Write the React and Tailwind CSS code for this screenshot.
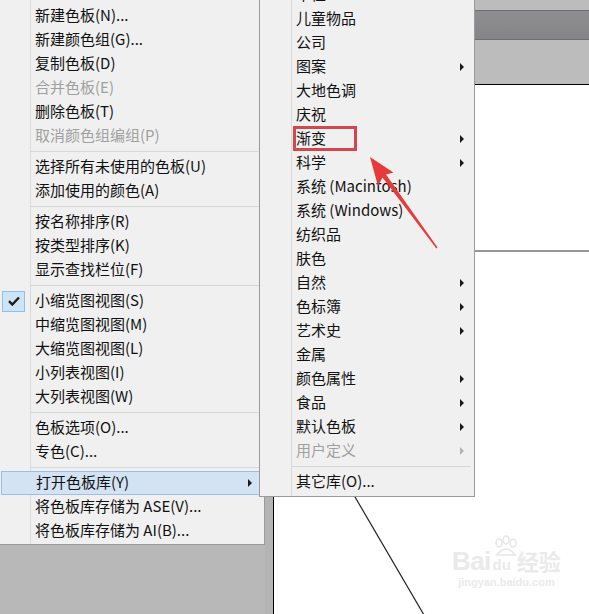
import React from "react";

const FONT = { fontFamily: '"Noto Sans CJK SC", "Noto Sans", sans-serif' };

const leftItems = [
  { t: "新建色板(N)..." },
  { t: "新建颜色组(G)..." },
  { t: "复制色板(D)" },
  { t: "合并色板(E)", d: true },
  { t: "删除色板(T)" },
  { t: "取消颜色组编组(P)", d: true },
  { sep: true },
  { t: "选择所有未使用的色板(U)" },
  { t: "添加使用的颜色(A)" },
  { sep: true },
  { t: "按名称排序(R)" },
  { t: "按类型排序(K)" },
  { t: "显示查找栏位(F)" },
  { sep: true },
  { t: "小缩览图视图(S)", c: true },
  { t: "中缩览图视图(M)" },
  { t: "大缩览图视图(L)" },
  { t: "小列表视图(I)" },
  { t: "大列表视图(W)" },
  { sep: true },
  { t: "色板选项(O)..." },
  { t: "专色(C)..." },
  { sep: true },
  { t: "打开色板库(Y)", h: true, a: true },
  { t: "将色板库存储为 ASE(V)..." },
  { t: "将色板库存储为 AI(B)..." },
];

const subItems = [
  { t: "中性" },
  { t: "儿童物品" },
  { t: "公司" },
  { t: "图案", a: true },
  { t: "大地色调" },
  { t: "庆祝" },
  { t: "渐变", a: true },
  { t: "科学", a: true },
  { t: "系统 (Macintosh)" },
  { t: "系统 (Windows)" },
  { t: "纺织品" },
  { t: "肤色" },
  { t: "自然", a: true },
  { t: "色标簿", a: true },
  { t: "艺术史", a: true },
  { t: "金属" },
  { t: "颜色属性", a: true },
  { t: "食品", a: true },
  { t: "默认色板", a: true },
  { t: "用户定义", a: true, d: true },
  { sep: true },
  { t: "其它库(O)..." },
];

function Arrow({ disabled }) {
  return (
    <span
      className={
        "w-0 h-0 border-y-[4px] border-y-transparent border-l-[4px] " +
        (disabled ? "border-l-[#b4b4b4]" : "border-l-[#1a1a1a]")
      }
    />
  );
}

function Check() {
  return (
    <svg width="12" height="10" viewBox="0 0 12 10">
      <path d="M1 5.2 L4.3 8.5 L11 1.5" fill="none" stroke="#1c1c1c" strokeWidth="2.4" />
    </svg>
  );
}

function MenuList({ items }) {
  return items.map((it, i) =>
    it.sep ? (
      <div key={i} className="h-[7px] flex items-center pl-[31px] pr-[3px]">
        <div className="h-px flex-1 bg-[#d7d7d7]" />
      </div>
    ) : (
      <div
        key={i}
        className={
          "h-6 flex items-center relative " +
          (it.h ? "mx-px bg-[#d3e3f4] border border-[#9cbfe4]" : "")
        }
      >
        <div className={"w-[31px] h-full flex items-center shrink-0 " + (it.h ? "-ml-px" : "")}>
          {it.c && (
            <div className="ml-[2px] w-[23px] h-[21px] bg-[#cde4f7] border border-[#8fc0e9] flex items-center justify-center">
              <Check />
            </div>
          )}
        </div>
        <span
          className={
            "pl-[4px] flex-1 text-[15px] leading-none whitespace-nowrap relative -top-[2px] " +
            (it.d ? "text-[#a0a0a0]" : "text-[#111]")
          }
        >
          {it.t}
        </span>
        {it.a && (
          <div className="w-[14px] flex items-center">
            <Arrow disabled={it.d} />
          </div>
        )}
      </div>
    )
  );
}

export default function App() {
  return (
    <div
      className="w-[589px] h-[614px] relative overflow-hidden bg-[#b9b8b9] flex"
      style={FONT}
    >
      {/* left main menu */}
      <div className="w-[265px] shrink-0 flex flex-col">
        <div className="bg-[#f0f0f0] border-r border-b border-[#9a9a9a] pt-1 pb-[1px] bg-[linear-gradient(to_right,#f0f0f0_30px,#d9d9d9_30px,#d9d9d9_31px,#f0f0f0_31px)]">
          <MenuList items={leftItems} />
        </div>
      </div>

      {/* canvas area */}
      <div className="flex-1 flex flex-col">
        <div className="h-[10px] bg-[#bdbcbd]" />
        <div className="h-[30px] bg-[linear-gradient(to_bottom,#8e8d8f,#858486)] border-y border-[#6e6d6f]" />
        <div className="h-[44px] bg-[#bdbcbd]" />
        <div className="flex-1 flex">
          <div className="w-[8px] bg-[#b5b4b5]" />
          <div className="flex-1 bg-white border-l border-t border-black relative">
            <svg className="absolute left-0 top-0" width="316" height="530">
              <line x1="150" y1="166" x2="316" y2="166" stroke="#333" strokeWidth="1" />
              <line x1="60" y1="376" x2="150" y2="530" stroke="#222" strokeWidth="1.2" />
            </svg>
            {/* watermark */}
            <div className="absolute left-[178px] top-[463px] flex flex-col items-center text-[#eaeaea]">
              <div className="flex items-end gap-[2px]" style={{ fontFamily: '"Liberation Sans", "Noto Sans CJK SC", sans-serif' }}>
                <span className="text-[26px] leading-none font-bold tracking-tight">Bai</span>
                <span className="relative text-[15px] leading-none font-bold mb-[2px]">
                  <svg className="absolute -top-[22px] left-0" width="26" height="24" viewBox="0 0 26 24">
                    <g fill="none" stroke="#e6e6e6" strokeWidth="1.5">
                      <ellipse cx="6" cy="8" rx="3" ry="4" />
                      <ellipse cx="13" cy="5" rx="3" ry="4" />
                      <ellipse cx="20" cy="8" rx="3" ry="4" />
                      <path d="M4 20 Q13 8 22 20 Z" />
                    </g>
                  </svg>
                  du
                </span>
                <span className="text-[22px] leading-none font-bold ml-[4px]">经验</span>
              </div>
              <div className="text-[11px] leading-none mt-[3px] font-bold" style={{ fontFamily: '"Liberation Sans", sans-serif' }}>
                jingyan.baidu.com
              </div>
            </div>
          </div>
        </div>
      </div>

      {/* submenu */}
      <div className="absolute left-[259px] top-[-21px] w-[216px] bg-[#f0f0f0] border border-[#9a9a9a] pt-[3px] pb-[2px] bg-[linear-gradient(to_right,#f0f0f0_31px,#d9d9d9_31px,#d9d9d9_32px,#f0f0f0_32px)]">
        <div className="[&>div>span]:pl-[5px]">
          <MenuList items={subItems} />
        </div>
      </div>

      {/* annotations */}
      <div className="absolute left-[293px] top-[126px] w-[64px] h-[25px] border-[3px] border-[#d0474d]" />
      <svg className="absolute left-0 top-0 pointer-events-none" width="589" height="614">
        <polygon
          fill="#e63a3b"
          points="370,157 393.5,172.5 386,174.5 437.6,247.5 436.4,248.5 382.5,177.5 378,186"
        />
      </svg>
    </div>
  );
}
